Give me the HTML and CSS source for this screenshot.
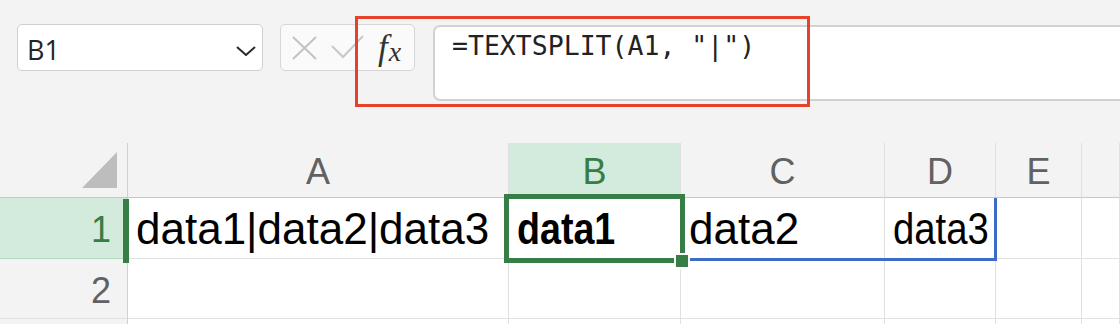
FILE: index.html
```html
<!DOCTYPE html>
<html lang="en">
<head>
    <meta charset="UTF-8">
    <meta name="viewport" content="width=device-width, initial-scale=1.0">
    <title>TEXTSPLIT</title>
    <link rel="stylesheet" href="styles.css">
</head>
<body>
    <div class="toolbar">
        <div class="namebox">
            <span>B1</span>
            <svg class="chevron" width="20" height="10" viewBox="0 0 20 10"><path d="M1 1 L10 9 L19 1" /></svg>
        </div>
        <div class="fnbox">
            <svg class="cancel" width="25" height="24" viewBox="0 0 25 24"><path d="M1 1 L24 23 M24 1 L1 23" /></svg>
            <svg class="enter" width="33" height="24" viewBox="0 0 33 24"><path d="M1 11 L12 22 L32 1" /></svg>
            <span class="fx"><i>f</i><i class="sub">x</i></span>
        </div>
        <div class="formula">=TEXTSPLIT(A1, "|")</div>
        <!-- highlight around the formula -->
        <div class="callout"></div>
    </div>

    <div class="sheet">
        <div class="corner"><svg width="36" height="37" viewBox="0 0 36 37"><path d="M35 0 L35 36 L0 36 Z" /></svg></div>
        <div class="colhead">A</div>
        <div class="colhead active">B</div>
        <div class="colhead">C</div>
        <div class="colhead">D</div>
        <div class="colhead">E</div>
        <div class="colhead"></div>

        <div class="rowhead active">1</div>
        <div class="cell">data1|data2|data3</div>
        <div class="cell"><span class="squeeze bold">data1</span></div>
        <div class="cell">data2</div>
        <div class="cell"><span class="squeeze">data3</span></div>
        <div class="cell"></div>
        <div class="cell"></div>

        <div class="rowhead">2</div>
        <div class="cell"></div>
        <div class="cell"></div>
        <div class="cell"></div>
        <div class="cell"></div>
        <div class="cell"></div>
        <div class="cell"></div>

        <div class="rowhead"></div>
        <div class="cell"></div>
        <div class="cell"></div>
        <div class="cell"></div>
        <div class="cell"></div>
        <div class="cell"></div>
        <div class="cell"></div>

        <div class="spill"></div>
        <div class="rowbar"></div>
        <div class="selection"></div>
        <div class="handle"></div>
    </div>
</body>
</html>
```

FILE: styles.css
```css
body {
    margin: 0;
    background: #f3f3f3;
    font-family: "Liberation Sans", Arial, sans-serif;
    overflow: hidden;
}

.toolbar {
    position: relative;
    display: flex;
    align-items: flex-start;
    height: 143px;
    box-sizing: border-box;
    padding: 24px 0 0 17px;
}
.namebox {
    width: 246px;
    height: 47px;
    box-sizing: border-box;
    display: flex;
    align-items: center;
    justify-content: space-between;
    padding: 4px 6px 0 9px;
    background: #fff;
    border: 1px solid #cfcfcf;
    border-radius: 5px;
    font-family: "Open Sans", "Noto Sans", sans-serif;
    font-size: 27px;
    color: #242424;
}
.chevron {
    margin-top: 2px;
}
.chevron path {
    fill: none;
    stroke: #2b2b2b;
    stroke-width: 2;
}
.fnbox {
    width: 135px;
    height: 47px;
    box-sizing: border-box;
    margin-left: 17px;
    display: flex;
    align-items: center;
    padding: 1px 0 0 11px;
    background: #fafafa;
    border: 1px solid #d6d6d6;
    border-radius: 5px;
}
.cancel path {
    fill: none;
    stroke: #c2c2c2;
    stroke-width: 2;
}
.enter {
    margin-left: 14px;
    margin-top: -2px;
}
.enter path {
    fill: none;
    stroke: #c8c8c8;
    stroke-width: 2;
}
.fx {
    margin-left: 14px;
    margin-top: -2px;
    font-family: "Liberation Serif", serif;
    font-size: 35px;
    color: #333;
    line-height: 1;
}
.fx .sub {
    font-size: 28px;
    position: relative;
    top: 2px;
    margin-left: 1px;
}
.formula {
    flex: 1;
    height: 76px;
    box-sizing: border-box;
    margin: 1px -20px 0 18px;
    padding: 3px 0 0 17px;
    background: #fff;
    border: 2px solid #d2d2d2;
    border-radius: 7px;
    font-family: "DejaVu Sans Mono", "Liberation Mono", monospace;
    font-size: 26.5px;
    line-height: 31px;
    color: #222;
}
.callout {
    position: absolute;
    left: 355px;
    top: 16px;
    width: 455px;
    height: 91px;
    box-sizing: border-box;
    border: 3px solid #e8412b;
}

.sheet {
    position: relative;
    display: grid;
    grid-template-columns: 128px 381px 172px 204px 111px 86px 1fr;
    grid-template-rows: 55px 61px 60px 20px;
}
.sheet > div {
    box-sizing: border-box;
}
.corner {
    border-right: 1px solid #d0d0d0;
    border-bottom: 1px solid #c8c8c8;
    padding: 9px 0 0 82px;
}
.corner path {
    fill: #bdbdbd;
}
.colhead {
    border-right: 1px solid #e0e0e0;
    border-bottom: 1px solid #c8c8c8;
    padding-top: 3px;
    text-align: center;
    font-size: 36px;
    line-height: 51px;
    color: #616161;
}
.colhead.active {
    background: #d3ebdc;
    color: #377d46;
}
.rowhead {
    border-right: 1px solid #d0d0d0;
    border-bottom: 1px solid #e1e1e1;
    padding: 4px 16px 0 0;
    text-align: right;
    font-size: 36px;
    line-height: 55px;
    color: #616161;
}
.rowhead.active {
    background: #d3ebdc;
    border-bottom-color: #b3d9bf;
    color: #377d46;
}
.cell {
    background: #fff;
    border-right: 1px solid #e1e1e1;
    border-bottom: 1px solid #e1e1e1;
    padding: 2px 0 0 8px;
    font-size: 44px;
    line-height: 58px;
    color: #000;
    white-space: nowrap;
}
.squeeze {
    display: inline-block;
    transform: scaleX(0.87);
    transform-origin: left center;
}
.bold {
    font-weight: bold;
    transform: scaleX(0.855);
}

.spill {
    position: absolute;
    left: 681px;
    top: 55px;
    width: 316px;
    height: 63px;
    border-right: 3px solid #3d6bc6;
    border-bottom: 3px solid #3d6bc6;
}
.rowbar {
    position: absolute;
    left: 123px;
    top: 56px;
    width: 6px;
    height: 64px;
    background: #377d46;
}
.selection {
    position: absolute;
    left: 504px;
    top: 51px;
    width: 181px;
    height: 69px;
    border: 5px solid #377d46;
}
.handle {
    position: absolute;
    left: 676px;
    top: 112px;
    width: 12px;
    height: 12px;
    background: #377d46;
    box-shadow: 0 0 0 2px #fff;
}
```
